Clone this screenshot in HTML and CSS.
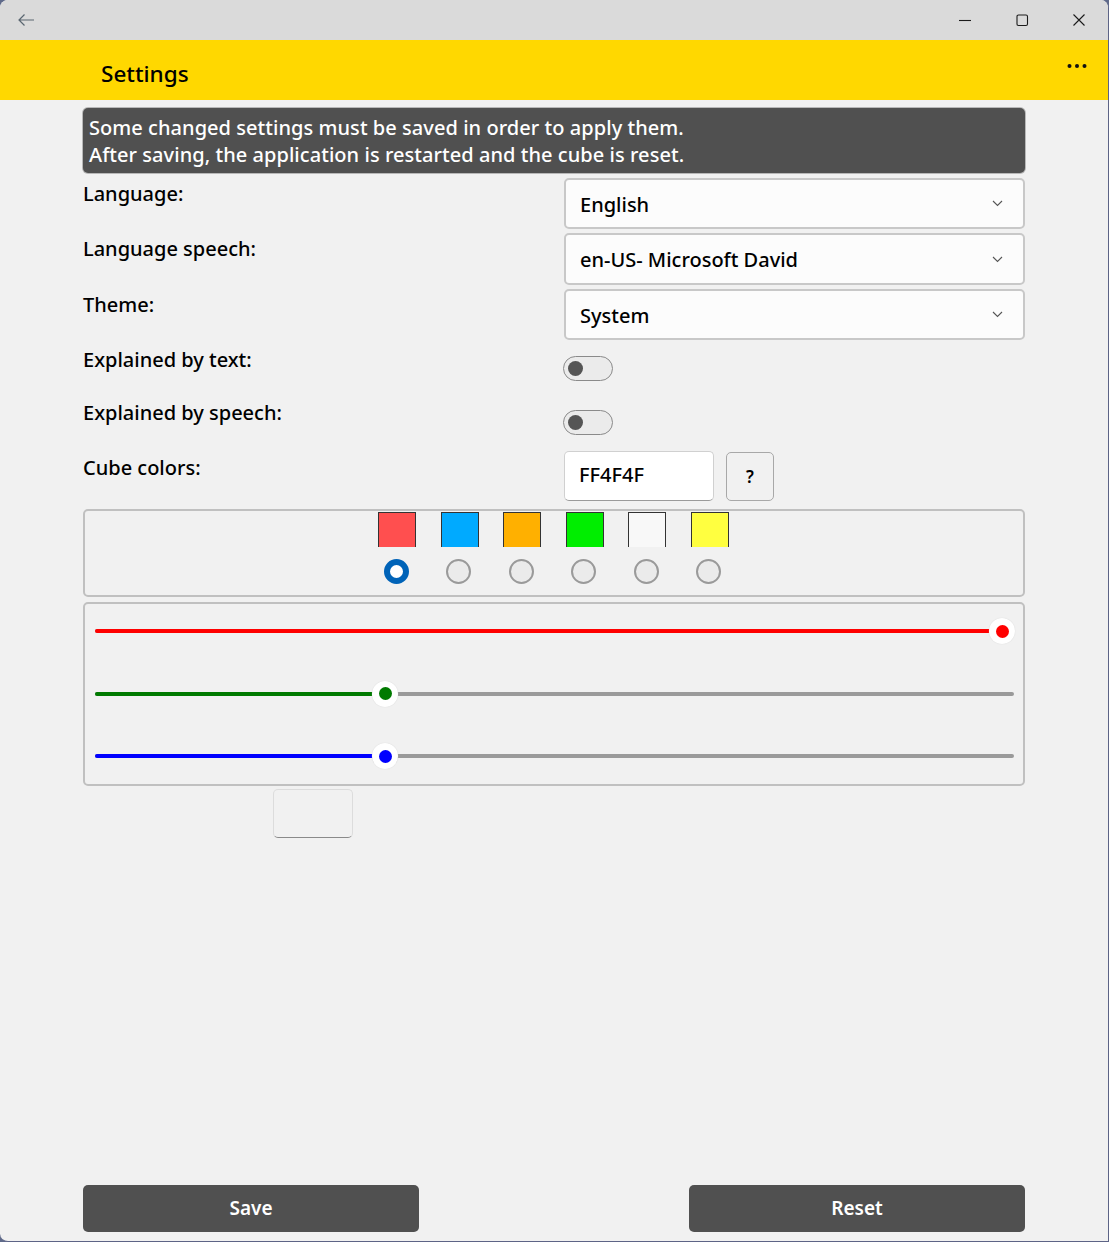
FILE: index.html
```html
<!DOCTYPE html>
<html lang="en">
<head>
<meta charset="utf-8">
<title>Settings</title>
<link rel="stylesheet" href="styles.css">
</head>
<body>
<div class="window">
  <div class="titlebar">
    <svg class="back" width="18" height="14" viewBox="0 0 18 14"><path d="M17 7H2M7.5 1.5L2 7l5.5 5.5" fill="none" stroke="#5a6670" stroke-width="1.2"/></svg>
    <div class="caption-buttons">
      <svg width="14" height="14" viewBox="0 0 14 14"><path d="M1 7.5h12" stroke="#1a1a1a" stroke-width="1.1"/></svg>
      <svg width="14" height="14" viewBox="0 0 14 14"><rect x="2" y="2" width="10.5" height="10.5" rx="1.5" fill="none" stroke="#1a1a1a" stroke-width="1.1"/></svg>
      <svg width="14" height="14" viewBox="0 0 14 14"><path d="M1.5 1.5l11 11M12.5 1.5l-11 11" stroke="#1a1a1a" stroke-width="1.1"/></svg>
    </div>
  </div>
  <div class="appbar">
    <span class="apptitle">Settings</span>
    <svg class="more" width="20" height="6" viewBox="0 0 20 6"><circle cx="2.5" cy="3" r="2" fill="#111"/><circle cx="10" cy="3" r="2" fill="#111"/><circle cx="17.5" cy="3" r="2" fill="#111"/></svg>
  </div>
  <div class="content">
    <div class="info">Some changed settings must be saved in order to apply them.<br>After saving, the application is restarted and the cube is reset.</div>

    <div class="row row-select r1">
      <div class="label">Language:</div>
      <div class="select"><span>English</span><svg class="chev" width="11" height="7" viewBox="0 0 11 7"><path d="M1 1l4.5 4.5L10 1" fill="none" stroke="#555" stroke-width="1.1"/></svg></div>
    </div>
    <div class="row row-select r2">
      <div class="label">Language speech:</div>
      <div class="select"><span>en-US- Microsoft David</span><svg class="chev" width="11" height="7" viewBox="0 0 11 7"><path d="M1 1l4.5 4.5L10 1" fill="none" stroke="#555" stroke-width="1.1"/></svg></div>
    </div>
    <div class="row row-select r3">
      <div class="label">Theme:</div>
      <div class="select"><span>System</span><svg class="chev" width="11" height="7" viewBox="0 0 11 7"><path d="M1 1l4.5 4.5L10 1" fill="none" stroke="#555" stroke-width="1.1"/></svg></div>
    </div>
    <div class="row row-toggle t1">
      <div class="label">Explained by text:</div>
      <div class="ctl"><div class="toggle"><span class="knob"></span></div></div>
    </div>
    <div class="row row-toggle t2">
      <div class="label">Explained by speech:</div>
      <div class="ctl"><div class="toggle"><span class="knob"></span></div></div>
    </div>
    <div class="row row-cube">
      <div class="label">Cube colors:</div>
      <div class="ctl cube-ctl"><div class="hex">FF4F4F</div><div class="help">?</div></div>
    </div>

    <div class="panel swatches">
      <div class="swatch-col"><span class="sw" style="background:#ff4f4f"></span><span class="radio on"></span></div>
      <div class="swatch-col"><span class="sw" style="background:#00aaff"></span><span class="radio"></span></div>
      <div class="swatch-col"><span class="sw" style="background:#ffb000"></span><span class="radio"></span></div>
      <div class="swatch-col"><span class="sw" style="background:#00ee00"></span><span class="radio"></span></div>
      <div class="swatch-col"><span class="sw" style="background:#f8f8f8"></span><span class="radio"></span></div>
      <div class="swatch-col"><span class="sw" style="background:#ffff40"></span><span class="radio"></span></div>
    </div>

    <div class="panel sliders">
      <div class="slider red"><div class="fill" style="width:907px"></div><span class="thumb" style="left:907px"></span></div>
      <div class="slider green"><div class="fill" style="width:290px"></div><span class="thumb" style="left:290px"></span></div>
      <div class="slider blue"><div class="fill" style="width:290px"></div><span class="thumb" style="left:290px"></span></div>
    </div>

    <div class="emptybox"></div>

    <div class="spacer"></div>
    <div class="buttons">
      <div class="btn">Save</div>
      <div class="btn">Reset</div>
    </div>
  </div>
</div>
</body>
</html>
```
FILE: styles.css
```css
html, body {
  margin: 0;
  padding: 0;
  background: #5f6a8a;
}
body {
  width: 1109px;
  height: 1242px;
  overflow: hidden;
  font-family: "Noto Sans", "Open Sans", sans-serif;
  color: #000;
}
.window {
  width: 1108px;
  height: 1241px;
  background: #f1f1f1;
  border-right: 1px solid #5d6486;
  border-bottom: 1px solid #5d6486;
  border-radius: 8px 8px 0 8px;
  overflow: hidden;
  display: flex;
  flex-direction: column;
}
.titlebar {
  height: 40px;
  background: #dadada;
  display: flex;
  align-items: center;
  justify-content: space-between;
  flex: none;
}
.back {
  margin-left: 17px;
}
.caption-buttons {
  display: flex;
  gap: 43px;
  margin-right: 22px;
}
.appbar {
  height: 60px;
  background: #ffd800;
  flex: none;
  display: flex;
  align-items: center;
  justify-content: space-between;
}
.apptitle {
  font-size: 22.5px;
  font-weight: 500;
  margin-left: 101px;
  margin-top: 7px;
}
.more {
  margin-right: 21px;
  margin-top: -8px;
}
.content {
  flex: 1;
  display: flex;
  flex-direction: column;
  padding: 7px 0 9px 83px;
  width: 942px;
}
.info {
  background: #505050;
  color: #fff;
  font-size: 20px;
  font-weight: 500;
  line-height: 27px;
  padding: 6px 6px 5px 6px;
  border-radius: 5px;
  box-shadow: 0 0 0 1px #b8b8b8;
  margin-top: 1px;
  letter-spacing: 0.05px;
}
.row {
  display: grid;
  grid-template-columns: 481px 461px;
}
.label {
  font-size: 20px;
  font-weight: 500;
  line-height: 26px;
}
.row-select .label {
  padding-top: 3px;
}
.r1 { margin-top: 5px; height: 51px; }
.r2 { margin-top: 4px; height: 52px; }
.r3 { margin-top: 4px; height: 51px; }
.select {
  background: #fcfcfc;
  border: 2px solid #c8c8c8;
  border-radius: 5px;
  display: flex;
  align-items: center;
  justify-content: space-between;
  padding: 0 20px 0 14px;
  font-size: 20px;
  font-weight: 500;
  box-sizing: border-box;
}
.select span {
  margin-top: 1px;
}
.row-toggle {
  height: 54px;
}
.t1 .label { padding-top: 7px; }
.t2 .label { padding-top: 6px; }
.toggle {
  width: 48px;
  height: 23px;
  border: 1px solid #8a8a8a;
  border-radius: 13px;
  background: #ebebeb;
  margin-top: 16px;
  position: relative;
  margin-left: -1px;
}
.knob {
  position: absolute;
  left: 4px;
  top: 4px;
  width: 15px;
  height: 15px;
  border-radius: 50%;
  background: #555;
}
.row-cube {
  margin-top: 3px;
  height: 50px;
}
.row-cube .label {
  padding-top: 4px;
}
.cube-ctl {
  display: flex;
  gap: 12px;
}
.hex {
  width: 150px;
  height: 50px;
  box-sizing: border-box;
  background: #fff;
  border: 1px solid #d0d0d0;
  border-bottom: 1px solid #9a9a9a;
  border-radius: 5px;
  font-size: 20px;
  font-weight: 500;
  line-height: 46px;
  padding-left: 14px;
}
.help {
  width: 48px;
  height: 49px;
  box-sizing: border-box;
  border: 1px solid #a8a8a8;
  border-radius: 5px;
  font-size: 17px;
  font-weight: 600;
  text-align: center;
  line-height: 48px;
  margin-top: 1px;
}
.panel {
  border: 2px solid #c0c0c0;
  border-radius: 5px;
  box-sizing: border-box;
}
.swatches {
  margin-top: 8px;
  height: 88px;
  display: flex;
  padding-left: 293px;
  gap: 24.6px;
}
.swatch-col {
  width: 38px;
  display: flex;
  flex-direction: column;
  align-items: center;
}
.sw {
  width: 38px;
  height: 35px;
  box-sizing: border-box;
  border: 1px solid #333;
  border-bottom: none;
  margin-top: 1px;
}
.radio {
  width: 25px;
  height: 25px;
  box-sizing: border-box;
  border-radius: 50%;
  border: 2px solid #9a9a9a;
  background: #ebebeb;
  margin-top: 12px;
  margin-left: -2px;
}
.radio.on {
  border: 6px solid #0063b8;
  background: #fff;
}
.sliders {
  margin-top: 5px;
  height: 184px;
  padding: 25px 9px 0 10px;
}
.slider {
  position: relative;
  height: 4px;
  border-radius: 2px;
  background: #9a9a9a;
  margin-bottom: 58.5px;
  width: 919px;
}
.slider .fill {
  height: 4px;
  border-radius: 2px;
}
.red .fill { background: #ff0000; }
.green .fill { background: #007a00; }
.blue .fill { background: #0000ff; }
.thumb {
  position: absolute;
  top: -11px;
  width: 26px;
  height: 26px;
  margin-left: -13px;
  border-radius: 50%;
  background: #fff;
  box-shadow: 0 0 1px #ccc;
  display: flex;
  align-items: center;
  justify-content: center;
}
.thumb::after {
  content: "";
  width: 13px;
  height: 13px;
  border-radius: 50%;
}
.red .thumb::after { background: #ff0000; }
.green .thumb::after { background: #007a00; }
.blue .thumb::after { background: #0000ff; }
.emptybox {
  margin-top: 3px;
  margin-left: 190px;
  width: 80px;
  height: 49px;
  box-sizing: border-box;
  border: 1px solid #dcdcdc;
  border-bottom: 1px solid #8a8a8a;
  border-radius: 5px;
}
.spacer {
  flex: 1;
}
.buttons {
  display: flex;
  justify-content: space-between;
}
.btn {
  width: 336px;
  height: 47px;
  background: #505050;
  color: #fff;
  border-radius: 5px;
  font-size: 19px;
  font-weight: 600;
  text-align: center;
  line-height: 47px;
}
```
